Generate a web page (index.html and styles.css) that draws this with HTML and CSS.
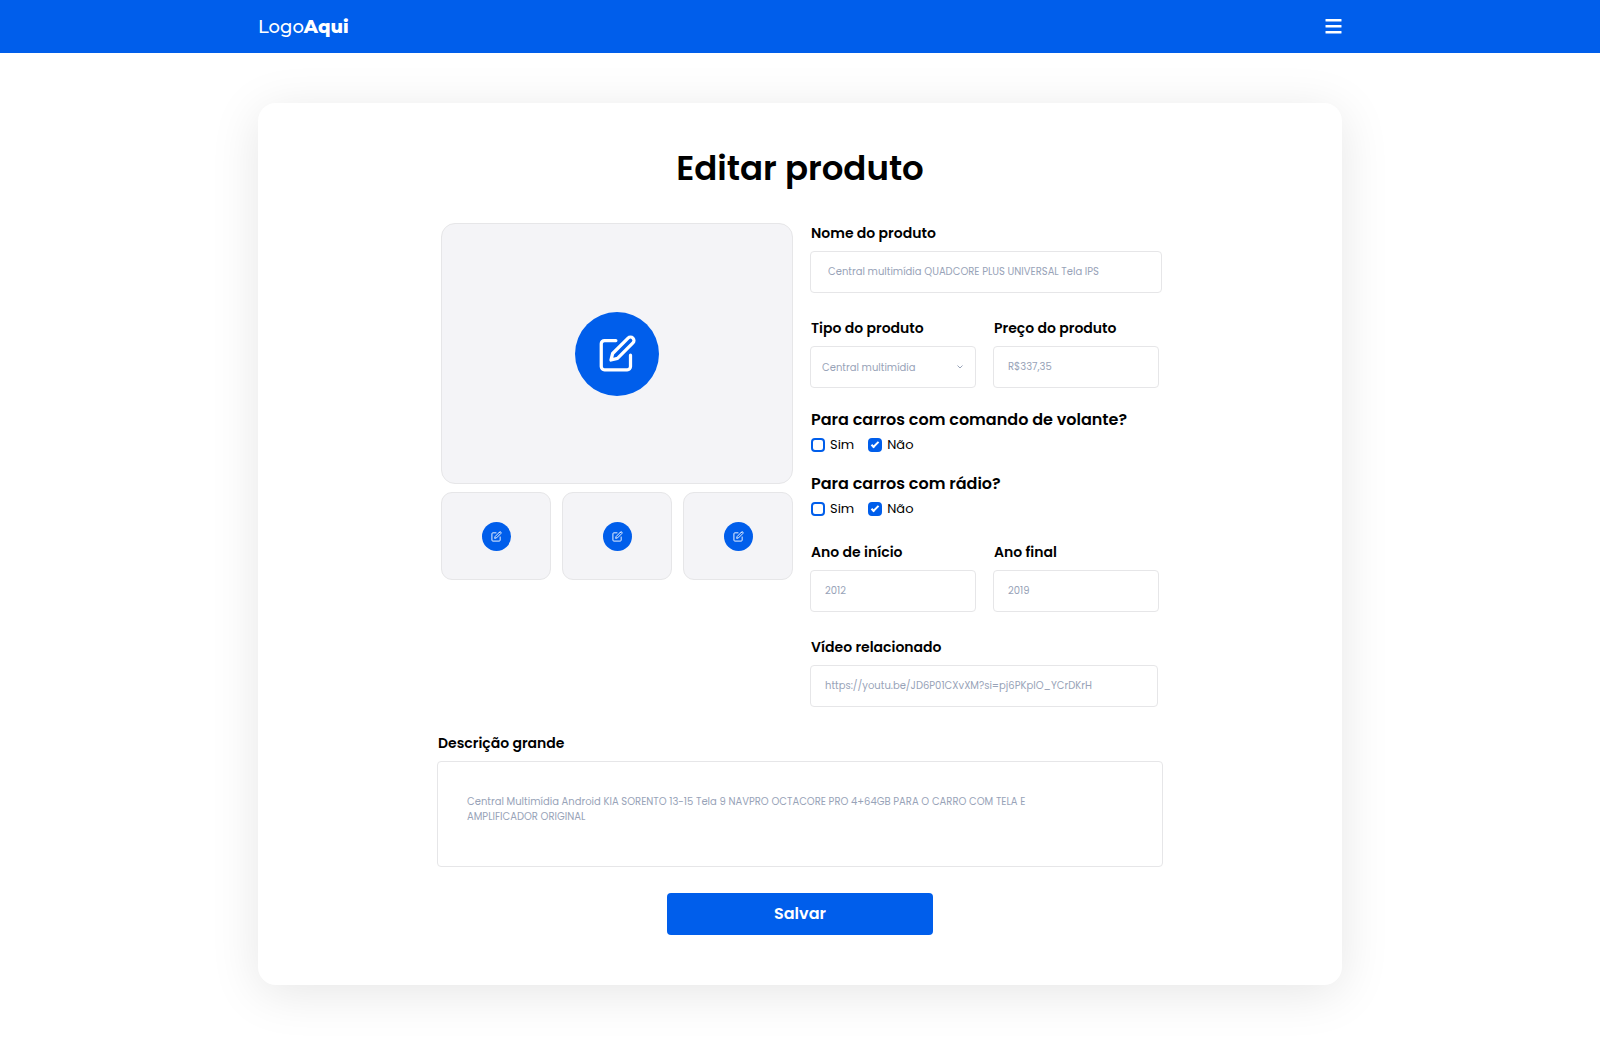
FILE: index.html
```html
<!DOCTYPE html>
<html lang="pt-BR">
<head>
  <meta charset="utf-8">
  <meta name="viewport" content="width=device-width, initial-scale=1">
  <title>Editar produto</title>
  <link rel="stylesheet" href="styles.css">
</head>
<body>
  <svg class="sprite" aria-hidden="true">
    <symbol id="icon-edit" viewBox="0 0 24 24" fill="none" stroke="currentColor" stroke-width="2" stroke-linecap="round" stroke-linejoin="round">
      <path d="M11 4H4a2 2 0 0 0-2 2v14a2 2 0 0 0 2 2h14a2 2 0 0 0 2-2v-7"/>
      <path d="M18.500 2.500a2.121 2.121 0 0 1 3 3L12 15l-4 1 1-4 9.500-9.500z"/>
    </symbol>
  </svg>

  <header class="topbar">
    <div class="topbar-inner">
      <a class="logo" href="#">Logo<strong>Aqui</strong></a>
      <button class="menu-button" type="button" aria-label="Menu">
        <svg class="menu-icon" viewBox="0 0 17 15" fill="currentColor">
          <rect x=".5" y="0" width="16" height="2.600" rx=".6"/>
          <rect x=".5" y="6" width="16" height="2.600" rx=".6"/>
          <rect x=".5" y="12" width="16" height="2.600" rx=".6"/>
        </svg>
      </button>
    </div>
  </header>

  <main class="page">
    <form class="card">
      <h1 class="title">Editar produto</h1>

      <div class="content">
        <div class="columns">
          <div class="gallery">
            <div class="photo photo-main">
              <button class="edit edit-large" type="button" aria-label="Editar foto principal"><svg class="edit-icon"><use href="#icon-edit"/></svg></button>
            </div>
            <div class="thumbs">
              <div class="photo photo-thumb">
                <button class="edit" type="button" aria-label="Editar foto 1"><svg class="edit-icon"><use href="#icon-edit"/></svg></button>
              </div>
              <div class="photo photo-thumb">
                <button class="edit" type="button" aria-label="Editar foto 2"><svg class="edit-icon"><use href="#icon-edit"/></svg></button>
              </div>
              <div class="photo photo-thumb">
                <button class="edit" type="button" aria-label="Editar foto 3"><svg class="edit-icon"><use href="#icon-edit"/></svg></button>
              </div>
            </div>
          </div>

          <div class="fields">
            <div class="field">
              <label class="label" for="nome">Nome do produto</label>
              <input class="control control-name" id="nome" type="text" value="Central multimídia QUADCORE PLUS UNIVERSAL Tela IPS">
            </div>

            <div class="pair">
              <div class="field">
                <label class="label" for="tipo">Tipo do produto</label>
                <div class="select">
                  <select class="control control-select" id="tipo">
                    <option>Central multimídia</option>
                  </select>
                  <svg class="chevron" viewBox="0 0 6 4" fill="none" stroke="currentColor"><path d="M.5.5 3 3 5.500.5"/></svg>
                </div>
              </div>
              <div class="field">
                <label class="label" for="preco">Preço do produto</label>
                <input class="control" id="preco" type="text" value="R$337,35">
              </div>
            </div>

            <div class="questions">
              <fieldset class="question">
                <legend class="legend">Para carros com comando de volante?</legend>
                <div class="options">
                  <label class="option"><input class="check" type="checkbox" name="volante-sim">Sim</label>
                  <label class="option"><input class="check" type="checkbox" name="volante-nao" checked>Não</label>
                </div>
              </fieldset>
              <fieldset class="question">
                <legend class="legend">Para carros com rádio?</legend>
                <div class="options">
                  <label class="option"><input class="check" type="checkbox" name="radio-sim">Sim</label>
                  <label class="option"><input class="check" type="checkbox" name="radio-nao" checked>Não</label>
                </div>
              </fieldset>
            </div>

            <div class="pair">
              <div class="field">
                <label class="label" for="inicio">Ano de início</label>
                <input class="control" id="inicio" type="text" value="2012">
              </div>
              <div class="field">
                <label class="label" for="final">Ano final</label>
                <input class="control" id="final" type="text" value="2019">
              </div>
            </div>

            <div class="field field-video">
              <label class="label" for="video">Vídeo relacionado</label>
              <input class="control" id="video" type="text" value="https://youtu.be/JD6P01CXvXM?si=pj6PKpIO_YCrDKrH">
            </div>
          </div>
        </div>

        <div class="field">
          <label class="label" for="descricao">Descrição grande</label>
          <textarea class="control control-area" id="descricao">Central Multimídia Android KIA SORENTO 13-15 Tela 9 NAVPRO OCTACORE PRO 4+64GB PARA O CARRO COM TELA E AMPLIFICADOR ORIGINAL</textarea>
        </div>

        <button class="save" type="submit">Salvar</button>
      </div>
    </form>
  </main>
</body>
</html>
```

FILE: styles.css
```css
:root {
  --blue: #005eeb;
  --line: #e6e6e8;
  --muted: #98a3b8;
}

*,
*::before,
*::after {
  box-sizing: border-box;
}

body {
  margin: 0;
  background: #fff;
  color: #000;
  font-family: Poppins, Inter, "Open Sans", sans-serif;
  font-size: 14px;
  line-height: 20px;
}

button,
input,
select,
textarea {
  margin: 0;
  font: inherit;
}

button {
  padding: 0;
  border: 0;
  cursor: pointer;
}

.sprite {
  display: none;
}

/* Top bar */

.topbar {
  padding: 0 24px;
  background: var(--blue);
}

.topbar-inner {
  display: flex;
  align-items: center;
  justify-content: space-between;
  max-width: 1084px;
  height: 53px;
  margin: 0 auto;
}

.logo {
  color: #fff;
  font-family: Montserrat, Poppins, Inter, sans-serif;
  font-size: 18px;
  font-weight: 500;
  line-height: 24px;
  text-decoration: none;
}

.logo strong {
  font-weight: 800;
}

.menu-button {
  display: flex;
  background: none;
  color: #fff;
}

.menu-icon {
  width: 17px;
  height: 15px;
}

/* Card */

.page {
  padding: 50px 24px 72px;
}

.card {
  max-width: 1084px;
  margin: 0 auto;
  padding: 40px 24px 50px;
  border-radius: 18px;
  background: #fff;
  box-shadow: 0 8px 50px rgba(0, 0, 0, 0.1);
}

.title {
  margin: 0 0 30px;
  font-size: 34px;
  font-weight: 600;
  line-height: 50px;
  text-align: center;
}

.content {
  display: flex;
  flex-direction: column;
  gap: 26px;
  max-width: 726px;
  margin: 0 auto;
}

.columns {
  display: grid;
  grid-template-columns: 1fr 1fr;
  gap: 14px;
}

/* Photos */

.gallery {
  display: flex;
  flex-direction: column;
  gap: 8px;
  padding-left: 4px;
}

.thumbs {
  display: grid;
  grid-template-columns: repeat(3, 1fr);
  gap: 11px;
}

.photo {
  display: flex;
  align-items: center;
  justify-content: center;
  border: 1px solid var(--line);
  background: #f4f4f7;
}

.photo-main {
  height: 261px;
  border-radius: 14px;
}

.photo-thumb {
  height: 88px;
  border-radius: 11px;
}

.edit {
  display: flex;
  align-items: center;
  justify-content: center;
  width: 29px;
  height: 29px;
  border-radius: 50%;
  background: var(--blue);
  color: #fff;
}

.edit-large {
  width: 84px;
  height: 84px;
}

.edit-icon {
  width: 11px;
  height: 11px;
}

.edit-large .edit-icon {
  width: 39px;
  height: 39px;
}

/* Fields */

.fields {
  display: flex;
  flex-direction: column;
  gap: 25px;
  padding: 0 1px 0 3px;
}

.field {
  display: flex;
  flex-direction: column;
  gap: 8px;
}

.field-video {
  margin-right: 4px;
}

.pair {
  display: grid;
  grid-template-columns: 1fr 1fr;
  gap: 17px;
  margin-right: 3px;
}

.label {
  padding-left: 1px;
  font-weight: 600;
}

.control {
  width: 100%;
  height: 42px;
  padding: 0 14px;
  border: 1px solid var(--line);
  border-radius: 4px;
  background: #fff;
  color: var(--muted);
  font-size: 10px;
  line-height: 15px;
}

.control-name {
  padding: 0 17px;
}

.control-select {
  padding: 0 11px;
  appearance: none;
}

.control-area {
  display: block;
  height: 106px;
  padding: 32px 96px 32px 29px;
  resize: none;
}

.select {
  display: grid;
  align-items: center;
}

.select > * {
  grid-area: 1 / 1;
}

.chevron {
  justify-self: end;
  width: 6px;
  height: 4px;
  margin-right: 13px;
  color: var(--muted);
  pointer-events: none;
}

/* Questions */

.questions {
  display: flex;
  flex-direction: column;
  gap: 17px;
  margin: -5px 0 -2px;
}

.question {
  margin: 0;
  padding: 0 0 0 1px;
  border: 0;
}

.legend {
  padding: 0 0 3px;
  font-size: 16px;
  font-weight: 600;
  line-height: 24px;
}

.options {
  display: flex;
  gap: 14px;
}

.option {
  display: flex;
  align-items: center;
  gap: 5px;
  font-size: 13px;
}

.check {
  display: grid;
  place-content: center;
  width: 14px;
  height: 14px;
  border: 2px solid var(--blue);
  border-radius: 4px;
  background: #fff;
  appearance: none;
}

.check:checked {
  background: var(--blue);
}

.check:checked::before {
  content: "";
  width: 8px;
  height: 4px;
  border: solid #fff;
  border-width: 0 0 2px 2px;
  transform: translateY(-1px) rotate(-45deg);
}

/* Submit */

.save {
  align-self: center;
  width: 266px;
  height: 42px;
  border-radius: 4px;
  background: var(--blue);
  color: #fff;
  font-size: 16px;
  font-weight: 600;
}
```
